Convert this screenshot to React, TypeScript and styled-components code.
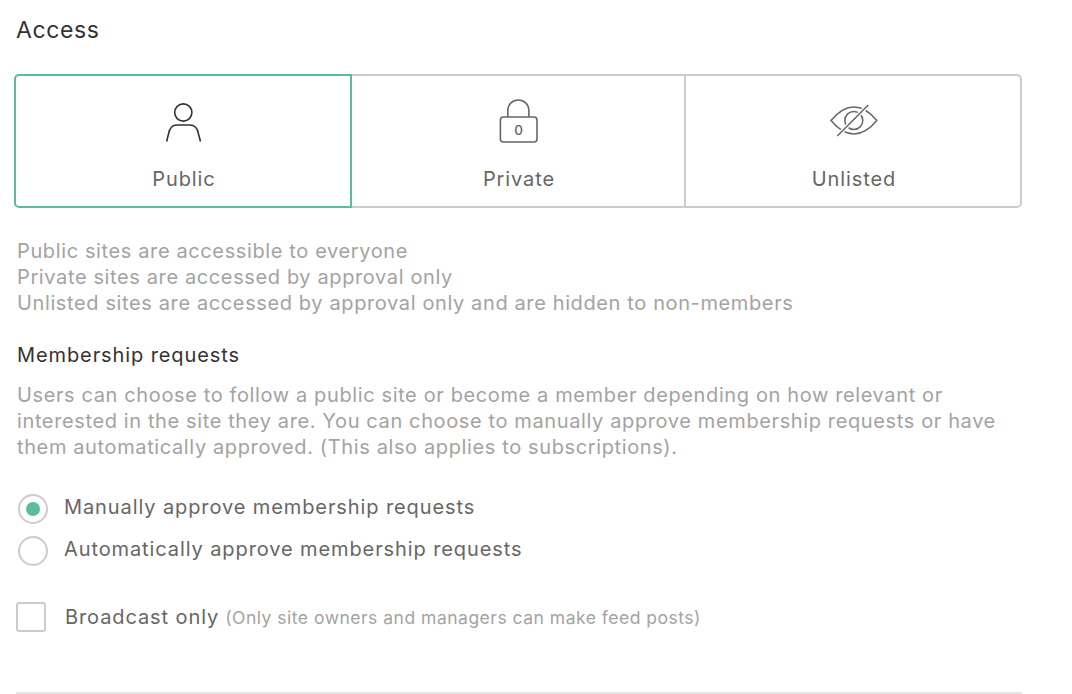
import styled, { createGlobalStyle } from "styled-components";

const GlobalStyle = createGlobalStyle`
  html, body {
    margin: 0;
    padding: 0;
    background: #fff;
    overflow: hidden;
  }
`;

const Page = styled.div`
  width: 1072px;
  height: 694px;
  box-sizing: border-box;
  padding: 16px 50px 0 14px;
  font-family: "Inter", sans-serif;
  letter-spacing: 0.9px;
  color: #666;
`;

const Title = styled.h2`
  margin: 0 0 30px 2px;
  font-size: 23px;
  line-height: 28px;
  font-weight: 400;
  letter-spacing: 0.6px;
  color: #333;
`;

const AccessGroup = styled.div`
  display: grid;
  grid-template-columns: 338px 334px 336px;
  height: 134px;
`;

const AccessCard = styled.div<{ $active?: boolean; $pos: "first" | "middle" | "last" }>`
  box-sizing: border-box;
  display: flex;
  flex-direction: column;
  align-items: center;
  border: 2px solid ${(p) => (p.$active ? "#5bbb9d" : "#ccc")};
  border-left-width: ${(p) => (p.$pos === "first" ? "2px" : "0")};
  border-radius: ${(p) =>
    p.$pos === "first" ? "5px 0 0 5px" : p.$pos === "last" ? "0 5px 5px 0" : "0"};
`;

const IconSlot = styled.div`
  height: 72px;
  margin-top: 22px;
  display: flex;
  align-items: flex-start;
  justify-content: center;
`;

const CardLabel = styled.div`
  font-size: 20px;
  line-height: 26px;
  margin-top: -4px;
  padding-left: 2px;
  color: #666;
`;

const Hint = styled.div<{ $flush?: boolean }>`
  margin: ${(p) => (p.$flush ? "0" : "30px")} 0 0 3px;
  font-size: 20px;
  line-height: 26px;
  letter-spacing: 0.62px;
  color: #a3a3a3;
`;

const Subtitle = styled.h3`
  margin: 26px 0 14px 3px;
  font-size: 20px;
  line-height: 26px;
  font-weight: 400;
  color: #333;
`;

const RadioList = styled.div`
  margin: 34px 0 0 4px;
  display: flex;
  flex-direction: column;
  gap: 12px;
`;

const RadioRow = styled.label`
  display: flex;
  align-items: center;
  gap: 16px;
  height: 30px;
  font-size: 20px;
  color: #666;
`;

const RadioText = styled.span`
  margin-bottom: 4px;
`;

const RadioCircle = styled.span<{ $checked?: boolean }>`
  box-sizing: border-box;
  width: 30px;
  height: 30px;
  border: 2px solid #ccc;
  border-radius: 50%;
  display: flex;
  align-items: center;
  justify-content: center;

  &::after {
    content: "";
    display: ${(p) => (p.$checked ? "block" : "none")};
    width: 14px;
    height: 14px;
    border-radius: 50%;
    background: #5bbb9d;
  }
`;

const CheckRow = styled.label`
  margin: 36px 0 0 2px;
  display: flex;
  align-items: center;
  gap: 19px;
  height: 30px;
  font-size: 20px;
  color: #666;
`;

const CheckBox = styled.span`
  box-sizing: border-box;
  width: 30px;
  height: 30px;
  border: 2px solid #ccc;
  border-radius: 3px;
`;

const CheckNote = styled.span`
  margin-left: 6px;
  font-size: 17.5px;
  letter-spacing: 0.5px;
  color: #a3a3a3;
`;

const Divider = styled.hr`
  margin: 60px 0 0 2px;
  width: 1006px;
  border: 0;
  border-top: 2px solid #e4e4e4;
`;

const PersonIcon = () => (
  <svg width="50" height="48" viewBox="0 0 50 48" fill="none" stroke="#333" strokeWidth="1.6">
    <circle cx="25.3" cy="14.5" r="8.6" />
    <path d="M8.6 43.5 L10.5 36 C11.5 30 15 27 19 27 H32 C36 27 39.5 30 40.5 36 L42.5 43.5" />
  </svg>
);

const LockIcon = () => (
  <svg width="50" height="48" viewBox="0 0 50 48" fill="none" stroke="#666" strokeWidth="1.6">
    <path d="M14.8 19 V13 C14.8 6 19.7 2 25.3 2 C30.9 2 35.9 6 35.9 13 V19" />
    <rect x="7.4" y="19" width="36.6" height="25" rx="3" />
    <text
      x="25.6"
      y="37"
      fontFamily="Inter, sans-serif"
      fontSize="13.5"
      fontWeight="500"
      letterSpacing="0"
      fill="#666"
      stroke="none"
      textAnchor="middle"
    >
      0
    </text>
  </svg>
);

const EyeOffIcon = () => (
  <svg width="50" height="48" viewBox="0 0 50 48" fill="none" stroke="#666" strokeWidth="1.5">
    <path d="M3 22.5 C11 13 18 9 25.8 9 C33.6 9 41 13 48.8 22.5 C41 32 33.6 36 25.8 36 C18 36 11 32 3 22.5 Z" />
    <circle cx="25.8" cy="22.5" r="9" />
    <path d="M9.3 38 L40.3 7" stroke="#fff" strokeWidth="4" />
    <path d="M9.3 38 L40.3 7" />
  </svg>
);

export default function App() {
  return (
    <Page>
      <GlobalStyle />
      <Title>Access</Title>
      <AccessGroup>
        <AccessCard $active $pos="first">
          <IconSlot><PersonIcon /></IconSlot>
          <CardLabel>Public</CardLabel>
        </AccessCard>
        <AccessCard $pos="middle">
          <IconSlot><LockIcon /></IconSlot>
          <CardLabel>Private</CardLabel>
        </AccessCard>
        <AccessCard $pos="last">
          <IconSlot><EyeOffIcon /></IconSlot>
          <CardLabel>Unlisted</CardLabel>
        </AccessCard>
      </AccessGroup>
      <Hint>
        Public sites are accessible to everyone
        <br />
        Private sites are accessed by approval only
        <br />
        Unlisted sites are accessed by approval only and are hidden to non-members
      </Hint>
      <Subtitle>Membership requests</Subtitle>
      <Hint $flush>
        Users can choose to follow a public site or become a member depending on how relevant or
        <br />
        interested in the site they are. You can choose to manually approve membership requests or have
        <br />
        them automatically approved. (This also applies to subscriptions).
      </Hint>
      <RadioList>
        <RadioRow><RadioCircle $checked /><RadioText>Manually approve membership requests</RadioText></RadioRow>
        <RadioRow><RadioCircle /><RadioText>Automatically approve membership requests</RadioText></RadioRow>
      </RadioList>
      <CheckRow>
        <CheckBox />
        <span>
          Broadcast only<CheckNote>(Only site owners and managers can make feed posts)</CheckNote>
        </span>
      </CheckRow>
      <Divider />
    </Page>
  );
}
